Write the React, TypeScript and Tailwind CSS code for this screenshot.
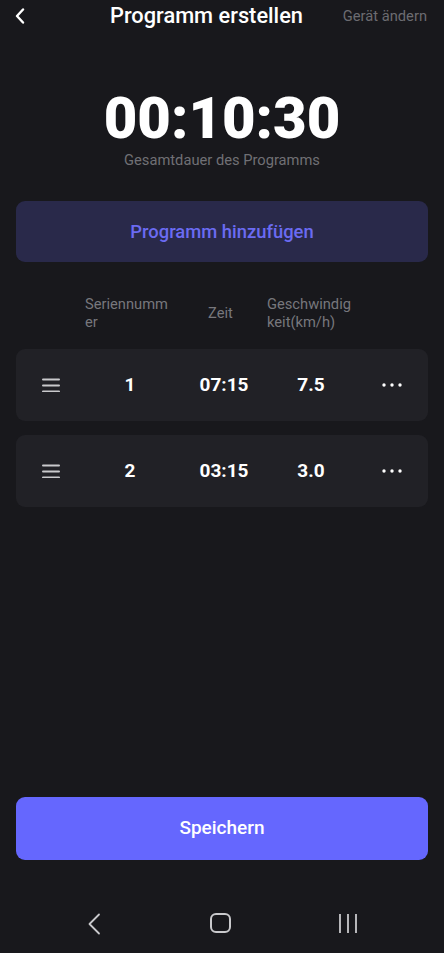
import React from "react";

const rows = [
  { n: "1", t: "07:15", s: "7.5" },
  { n: "2", t: "03:15", s: "3.0" },
];

function Hamburger() {
  return (
    <svg width="20" height="14" viewBox="0 0 20 14" className="block">
      <rect x="1" y="0.5" width="18" height="2" rx="1" fill="#c9c9cc" />
      <rect x="1" y="6.5" width="18" height="2" rx="1" fill="#c9c9cc" />
      <rect x="1" y="12.5" width="18" height="2" rx="1" fill="#c9c9cc" />
    </svg>
  );
}

function Dots() {
  return (
    <svg width="20" height="4" viewBox="0 0 20 4" className="block">
      <circle cx="2" cy="2" r="1.7" fill="#ffffff" />
      <circle cx="10" cy="2" r="1.7" fill="#ffffff" />
      <circle cx="18" cy="2" r="1.7" fill="#ffffff" />
    </svg>
  );
}

export default function App() {
  return (
    <div
      className="w-[444px] h-[953px] bg-[#18181c] flex flex-col overflow-hidden"
      style={{ fontFamily: "Roboto, 'Noto Sans', sans-serif" }}
    >
      {/* Top bar */}
      <div className="h-8 flex items-center relative">
        <div className="w-[110px] pl-[15px] flex items-center">
          <svg width="10" height="16" viewBox="0 0 10 16">
            <path d="M8 1.5 L2 8 L8 14.5" stroke="#ffffff" strokeWidth="2.4" fill="none" strokeLinecap="round" strokeLinejoin="round" />
          </svg>
        </div>
        <div className="text-white text-[21.8px] font-medium leading-none">Programm erstellen</div>
        <div className="ml-auto pr-[17px] text-[14.7px] text-[#6c6c71] leading-none">Gerät ändern</div>
      </div>

      {/* Timer */}
      <div className="mt-[57px] flex justify-center">
        <div className="text-white text-[58px] font-black leading-none">00:10:30</div>
      </div>
      <div className="mt-[3px] text-center text-[14.7px] leading-5 text-[#707075]">Gesamtdauer des Programms</div>

      {/* Add button */}
      <div className="mt-[31px] mx-4 h-[61px] rounded-[9px] bg-[#29294a] flex items-center justify-center">
        <span className="text-[#6b6bf2] text-[18.4px] font-medium">Programm hinzufügen</span>
      </div>

      {/* Column headers */}
      <div className="mt-[33px] h-9 flex items-center text-[14.7px] leading-[18px] text-[#77777c]">
        <div className="ml-[85px] w-[87px] break-all">Seriennummer</div>
        <div className="ml-[36px] w-[26px]">Zeit</div>
        <div className="ml-[33px] w-[87px] break-all">Geschwindigkeit(km/h)</div>
      </div>

      {/* Rows */}
      <div className="mt-[18px] mx-4 flex flex-col gap-[14px]">
        {rows.map((r) => (
          <div key={r.n} className="h-[72px] rounded-[9px] bg-[#212126] flex items-center text-white font-bold text-[19px]">
            <div className="w-[70px] pl-[25px] flex items-center">
              <Hamburger />
            </div>
            <div className="w-[88px] text-center">{r.n}</div>
            <div className="w-[100px] text-center">{r.t}</div>
            <div className="w-[74px] text-center">{r.s}</div>
            <div className="ml-[34px] flex items-center">
              <Dots />
            </div>
          </div>
        ))}
      </div>

      <div className="flex-1" />

      {/* Save button */}
      <div className="mx-4 h-[63px] rounded-[9px] bg-[#6567fe] flex items-center justify-center">
        <span className="text-white text-[19px] font-medium">Speichern</span>
      </div>

      {/* Nav bar */}
      <div className="h-[93px] flex items-start pt-[53px]">
        <div className="w-[190px] flex justify-center">
          <svg width="16" height="22" viewBox="0 0 16 22">
            <path d="M13 1.5 L3.5 11 L13 20.5" stroke="#c9c9cc" strokeWidth="1.8" fill="none" strokeLinecap="round" strokeLinejoin="round" />
          </svg>
        </div>
        <div className="w-[66px] flex justify-center">
          <div className="w-[21px] h-[20px] rounded-[6px] border-[2px] border-[#c9c9cc]" />
        </div>
        <div className="w-[194px] flex justify-center">
          <svg width="20" height="21" viewBox="0 0 20 21">
            <line x1="2" y1="1" x2="2" y2="20" stroke="#c9c9cc" strokeWidth="1.8" />
            <line x1="10" y1="1" x2="10" y2="20" stroke="#c9c9cc" strokeWidth="1.8" />
            <line x1="18" y1="1" x2="18" y2="20" stroke="#c9c9cc" strokeWidth="1.8" />
          </svg>
        </div>
      </div>
    </div>
  );
}
